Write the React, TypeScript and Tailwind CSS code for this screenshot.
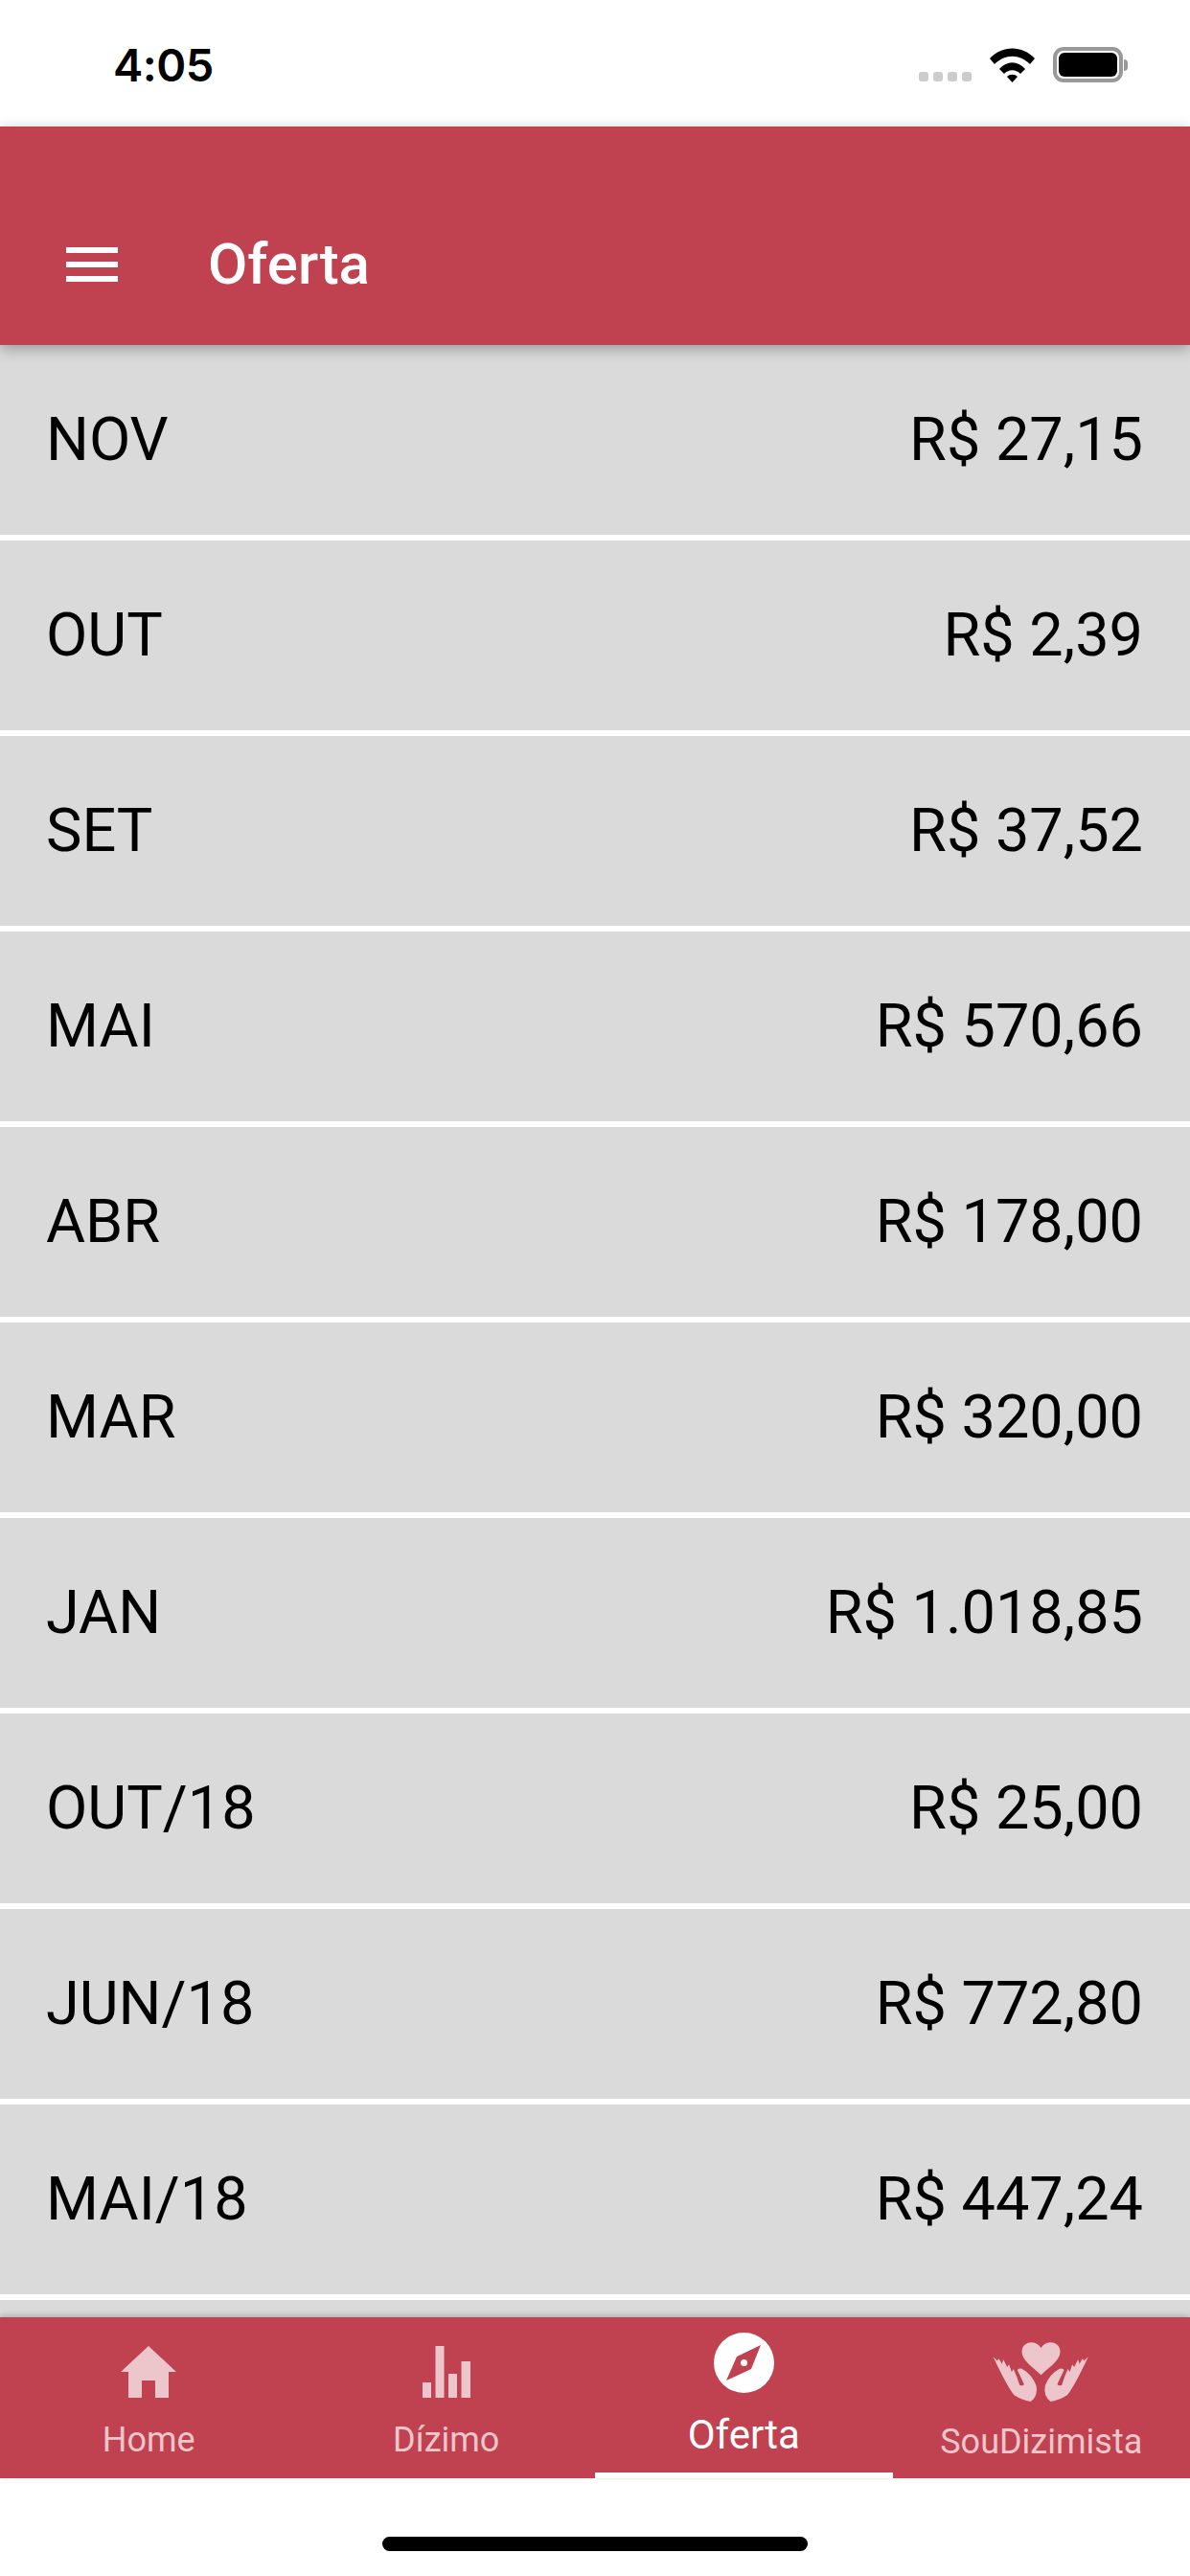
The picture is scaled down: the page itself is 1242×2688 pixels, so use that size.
import type { ReactNode } from "react";

const rows = [
  { month: "NOV", value: "R$ 27,15" },
  { month: "OUT", value: "R$ 2,39" },
  { month: "SET", value: "R$ 37,52" },
  { month: "MAI", value: "R$ 570,66" },
  { month: "ABR", value: "R$ 178,00" },
  { month: "MAR", value: "R$ 320,00" },
  { month: "JAN", value: "R$ 1.018,85" },
  { month: "OUT/18", value: "R$ 25,00" },
  { month: "JUN/18", value: "R$ 772,80" },
  { month: "MAI/18", value: "R$ 447,24" },
  { month: "", value: "" },
];

function HomeIcon() {
  return (
    <svg width="58" height="54" viewBox="0 0 58 54" className="fill-[#ecc6cb]">
      <path d="M29 0 L58 27 L50 27 L50 54 L36 54 L36 36 L22 36 L22 54 L8 54 L8 27 L0 27 Z" />
    </svg>
  );
}

function BarsIcon() {
  return (
    <svg width="50" height="54" viewBox="0 0 50 54" className="fill-[#ecc6cb]">
      <rect x="0" y="38" width="9" height="16" />
      <rect x="13.5" y="0" width="9" height="54" />
      <rect x="27" y="29" width="9" height="25" />
      <rect x="40.5" y="16" width="9.5" height="38" />
    </svg>
  );
}

function CompassIcon() {
  return (
    <svg width="63" height="63" viewBox="0 0 63 63">
      <circle cx="31.5" cy="31.5" r="31.5" fill="#ffffff" />
      <path d="M49 13 L39 38 L13 50 L24 25 Z" fill="#c04150" />
      <circle cx="31.5" cy="31.5" r="3.5" fill="#ffffff" />
    </svg>
  );
}

function HandsIcon() {
  const hand =
    "M200 118 L213 130 L218 124 L228 140 L232 126 L244 150 L250 142 L258 165 L264 156 L274 180 L283 206 Q292 210 297 204 Q288 184 276 160 Q278 152 290 155 Q322 172 335 208 Q342 240 318 258 Q290 254 266 238 Q246 215 200 118 Z";
  return (
    <svg width="107" height="70" viewBox="190 60 320 210" className="fill-[#ecc6cb]">
      <path d="M350 175 C325 150 290 130 290 102 C290 82 306 72 322 73 C334 74 344 80 350 90 C356 80 366 74 378 73 C394 72 410 82 410 102 C410 130 375 150 350 175 Z" />
      <path d={hand} />
      <path d={hand} transform="translate(698 0) scale(-1 1)" />
    </svg>
  );
}

function Tab({ children }: { children: ReactNode }) {
  return <div className="flex flex-col items-center">{children}</div>;
}

export default function App() {
  return (
    <div className="flex h-[2688px] w-[1242px] flex-col overflow-hidden bg-white font-['Roboto',sans-serif]">
      {/* status bar */}
      <div className="flex h-[132px] shrink-0 items-start justify-between pt-[38px] pr-[65px] pl-[118px]">
        <span className="font-['Inter',sans-serif] text-[47px] leading-[60px] font-semibold tracking-[-0.5px] text-black">
          4:05
        </span>
        <div className="flex items-end pt-[11px]">
          <div className="mb-px flex gap-[5px]">
            <div className="h-[10px] w-[10px] rounded-[3px] bg-[#cccccc]" />
            <div className="h-[10px] w-[10px] rounded-[3px] bg-[#cccccc]" />
            <div className="h-[10px] w-[10px] rounded-[3px] bg-[#cccccc]" />
            <div className="h-[10px] w-[10px] rounded-[3px] bg-[#cccccc]" />
          </div>
          <svg width="47" height="36" viewBox="0 0 47 36" className="ml-[19px]">
            <path
              d="M0 11 C13 -3 34 -3 47 11 L42 17 C31 6 16 6 5 17 Z M10 22 C18 13 29 13 37 22 L32 27 C27 22 20 22 15 27 Z M18 30 C21 27 26 27 29 30 L23.5 36 Z"
              fill="#000000"
            />
          </svg>
          <div className="ml-[19px] flex items-center">
            <div className="h-[37px] w-[73px] rounded-[11px] border-[4px] border-[#999999] p-[2px]">
              <div className="h-full w-full rounded-[6px] bg-black" />
            </div>
            <div className="ml-px h-[12px] w-[4px] rounded-r-full bg-[#999999]" />
          </div>
        </div>
      </div>

      {/* header */}
      <div className="relative z-10 flex h-[228px] shrink-0 items-center gap-[94px] bg-[#c04150] pt-[60px] pl-[69px] shadow-[0_4px_14px_rgba(0,0,0,0.3)]">
        <svg width="54" height="36" viewBox="0 0 54 36" fill="#ffffff">
          <rect width="54" height="6" y="0" />
          <rect width="54" height="6" y="15" />
          <rect width="54" height="6" y="30" />
        </svg>
        <span className="text-[60px] leading-none font-medium text-white">Oferta</span>
      </div>

      {/* list */}
      <div className="flex min-h-0 flex-1 flex-col gap-[6px] overflow-hidden">
        {rows.map((row, i) => (
          <div
            key={i}
            className="flex h-[198px] shrink-0 items-center justify-between bg-[#dadada] pr-[49px] pl-[48px] text-[63px] text-black"
          >
            <span>{row.month}</span>
            <span>{row.value}</span>
          </div>
        ))}
      </div>

      {/* tabs */}
      <div className="relative z-10 grid h-[168px] shrink-0 grid-cols-4 bg-[#c04150] text-[36px] leading-[42px] text-[#ecc6cb] shadow-[0_-2px_6px_rgba(0,0,0,0.2)]">
        <Tab>
          <div className="mt-[30px]">
            <HomeIcon />
          </div>
          <span className="mt-[23px]">Home</span>
        </Tab>
        <Tab>
          <div className="mt-[30px]">
            <BarsIcon />
          </div>
          <span className="mt-[23px]">Dízimo</span>
        </Tab>
        <div className="flex flex-col items-center border-b-[6px] border-white">
          <div className="mt-[16px]">
            <CompassIcon />
          </div>
          <span className="mt-[20px] text-[42px] leading-[48px] text-white">Oferta</span>
        </div>
        <Tab>
          <div className="mt-[22px]">
            <HandsIcon />
          </div>
          <span className="mt-[17px]">SouDizimista</span>
        </Tab>
      </div>

      {/* home indicator */}
      <div className="flex h-[102px] shrink-0 justify-center pt-[61px]">
        <div className="h-[15px] w-[444px] rounded-full bg-black" />
      </div>
    </div>
  );
}
